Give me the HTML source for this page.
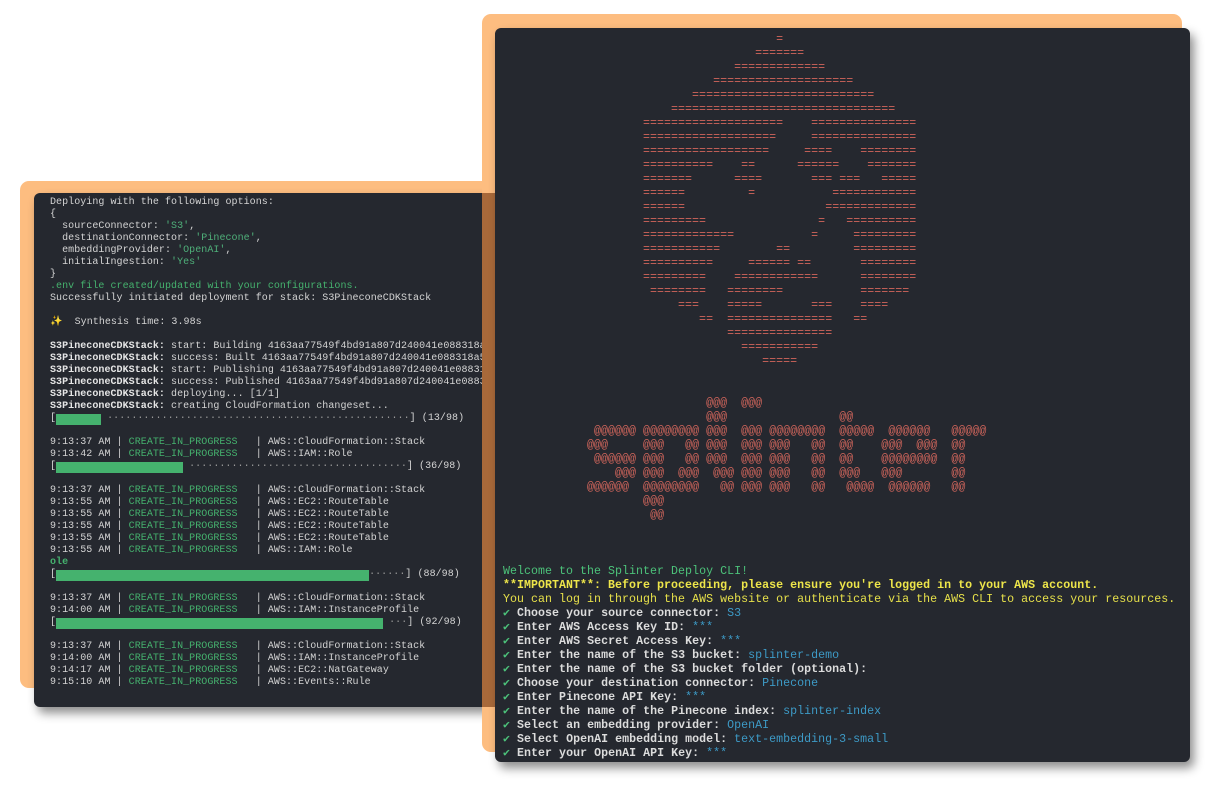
<!DOCTYPE html>
<html><head><meta charset="utf-8"><style>
html,body{margin:0;padding:0;background:#fff;width:1222px;height:792px;overflow:hidden;position:relative}
.o{position:absolute;background:#fdbd80;border-radius:9px}
.t{position:absolute;background:#25282f;border-radius:6px;box-shadow:4px 6px 10px rgba(0,0,0,0.45);overflow:hidden}
pre{margin:0;position:absolute;font-family:"Liberation Mono","DejaVu Sans Mono",monospace;white-space:pre}
.l{font-size:10px;line-height:12px;color:#d4d4d4;left:16px;top:4px;letter-spacing:0.05px}
.g{color:#45b26e}
.s{color:#4fb07a}
.b{font-weight:bold;color:#e6e6e6}
.bar{display:inline-block;background:#45b26e;height:11px;vertical-align:top;position:relative;top:1px}
.d{color:#9a9a9a}
.r{font-size:11.6px;line-height:14px;color:#d2665c;letter-spacing:0.05px}
.x{font-size:11.6px;line-height:14px;color:#d8d8d8;letter-spacing:0.045px}
.y{color:#e6e04a}
.yb{color:#eee64a;font-weight:bold}
.c{color:#4cc27a}
.v{color:#3d9ac6}
.w{font-weight:bold;color:#dcdcdc}
</style></head><body>
<div class="o" style="left:20px;top:181px;width:520px;height:507px"></div>
<div class="t" style="left:34px;top:193px;width:480px;height:514px">
<pre class="l">Deploying with the following options:
{
  sourceConnector: <span class="s">'S3'</span>,
  destinationConnector: <span class="s">'Pinecone'</span>,
  embeddingProvider: <span class="s">'OpenAI'</span>,
  initialIngestion: <span class="s">'Yes'</span>
}
<span class="g">.env file created/updated with your configurations.</span>
Successfully initiated deployment for stack: S3PineconeCDKStack

<span class="y">✨</span>  Synthesis time: 3.98s

<span class="b">S3PineconeCDKStack:</span> start: Building 4163aa77549f4bd91a807d240041e088318a533
<span class="b">S3PineconeCDKStack:</span> success: Built 4163aa77549f4bd91a807d240041e088318a533
<span class="b">S3PineconeCDKStack:</span> start: Publishing 4163aa77549f4bd91a807d240041e088318a
<span class="b">S3PineconeCDKStack:</span> success: Published 4163aa77549f4bd91a807d240041e088318
<span class="b">S3PineconeCDKStack:</span> deploying... [1/1]
<span class="b">S3PineconeCDKStack:</span> creating CloudFormation changeset...
[<span class="bar" style="width:45px"></span><span class="d"> ··················································</span>] (13/98)

9:13:37 AM | <span class="g">CREATE_IN_PROGRESS</span>   | AWS::CloudFormation::Stack
9:13:42 AM | <span class="g">CREATE_IN_PROGRESS</span>   | AWS::IAM::Role
[<span class="bar" style="width:127px"></span><span class="d"> ····································</span>] (36/98)

9:13:37 AM | <span class="g">CREATE_IN_PROGRESS</span>   | AWS::CloudFormation::Stack
9:13:55 AM | <span class="g">CREATE_IN_PROGRESS</span>   | AWS::EC2::RouteTable
9:13:55 AM | <span class="g">CREATE_IN_PROGRESS</span>   | AWS::EC2::RouteTable
9:13:55 AM | <span class="g">CREATE_IN_PROGRESS</span>   | AWS::EC2::RouteTable
9:13:55 AM | <span class="g">CREATE_IN_PROGRESS</span>   | AWS::EC2::RouteTable
9:13:55 AM | <span class="g">CREATE_IN_PROGRESS</span>   | AWS::IAM::Role
<span class="g" style="font-weight:bold">ole</span>
[<span class="bar" style="width:313px"></span><span class="d">······</span>] (88/98)

9:13:37 AM | <span class="g">CREATE_IN_PROGRESS</span>   | AWS::CloudFormation::Stack
9:14:00 AM | <span class="g">CREATE_IN_PROGRESS</span>   | AWS::IAM::InstanceProfile
[<span class="bar" style="width:327px"></span><span class="d"> ···</span>] (92/98)

9:13:37 AM | <span class="g">CREATE_IN_PROGRESS</span>   | AWS::CloudFormation::Stack
9:14:00 AM | <span class="g">CREATE_IN_PROGRESS</span>   | AWS::IAM::InstanceProfile
9:14:17 AM | <span class="g">CREATE_IN_PROGRESS</span>   | AWS::EC2::NatGateway
9:15:10 AM | <span class="g">CREATE_IN_PROGRESS</span>   | AWS::Events::Rule</pre>
</div>
<div class="o" style="left:482px;top:14px;width:700px;height:738px"></div>
<div style="position:absolute;left:482px;top:193px;width:13px;height:514px;background:#a8693a"></div>
<div class="t" style="left:495px;top:28px;width:695px;height:734px">
<pre class="r" style="left:148px;top:5px">                   =
                =======
             =============
          ====================
       ==========================
    ================================
====================    ===============
===================     ===============
==================     ====    ========
==========    ==      ======    =======
=======      ====       === ===   =====
======         =           ============
======                    =============
=========                =   ==========
=============           =     =========
===========        ==         =========
==========     ====== ==       ========
=========    ============      ========
 ========   ========           =======
     ===    =====       ===    ====
        ==  ===============   ==
            ===============
              ===========
                 =====</pre>
<pre class="r" style="left:92px;top:369px">                 @@@  @@@
                 @@@                @@
 @@@@@@ @@@@@@@@ @@@  @@@ @@@@@@@@  @@@@@  @@@@@@   @@@@@
@@@     @@@   @@ @@@  @@@ @@@   @@  @@    @@@  @@@  @@
 @@@@@@ @@@   @@ @@@  @@@ @@@   @@  @@    @@@@@@@@  @@
    @@@ @@@  @@@  @@@ @@@ @@@   @@  @@@   @@@       @@
@@@@@@  @@@@@@@@   @@ @@@ @@@   @@   @@@@  @@@@@@   @@
        @@@
         @@</pre>
<pre class="x" style="left:8px;top:537px"><span class="c">Welcome to the Splinter Deploy CLI!</span>
<span class="yb">**IMPORTANT**: Before proceeding, please ensure you're logged in to your AWS account.</span>
<span class="y">You can log in through the AWS website or authenticate via the AWS CLI to access your resources.</span>
<span class="c">✔</span> <span class="w">Choose your source connector:</span> <span class="v">S3</span>
<span class="c">✔</span> <span class="w">Enter AWS Access Key ID:</span> <span class="v">***</span>
<span class="c">✔</span> <span class="w">Enter AWS Secret Access Key:</span> <span class="v">***</span>
<span class="c">✔</span> <span class="w">Enter the name of the S3 bucket:</span> <span class="v">splinter-demo</span>
<span class="c">✔</span> <span class="w">Enter the name of the S3 bucket folder (optional):</span>
<span class="c">✔</span> <span class="w">Choose your destination connector:</span> <span class="v">Pinecone</span>
<span class="c">✔</span> <span class="w">Enter Pinecone API Key:</span> <span class="v">***</span>
<span class="c">✔</span> <span class="w">Enter the name of the Pinecone index:</span> <span class="v">splinter-index</span>
<span class="c">✔</span> <span class="w">Select an embedding provider:</span> <span class="v">OpenAI</span>
<span class="c">✔</span> <span class="w">Select OpenAI embedding model:</span> <span class="v">text-embedding-3-small</span>
<span class="c">✔</span> <span class="w">Enter your OpenAI API Key:</span> <span class="v">***</span></pre>
</div>
</body></html>
